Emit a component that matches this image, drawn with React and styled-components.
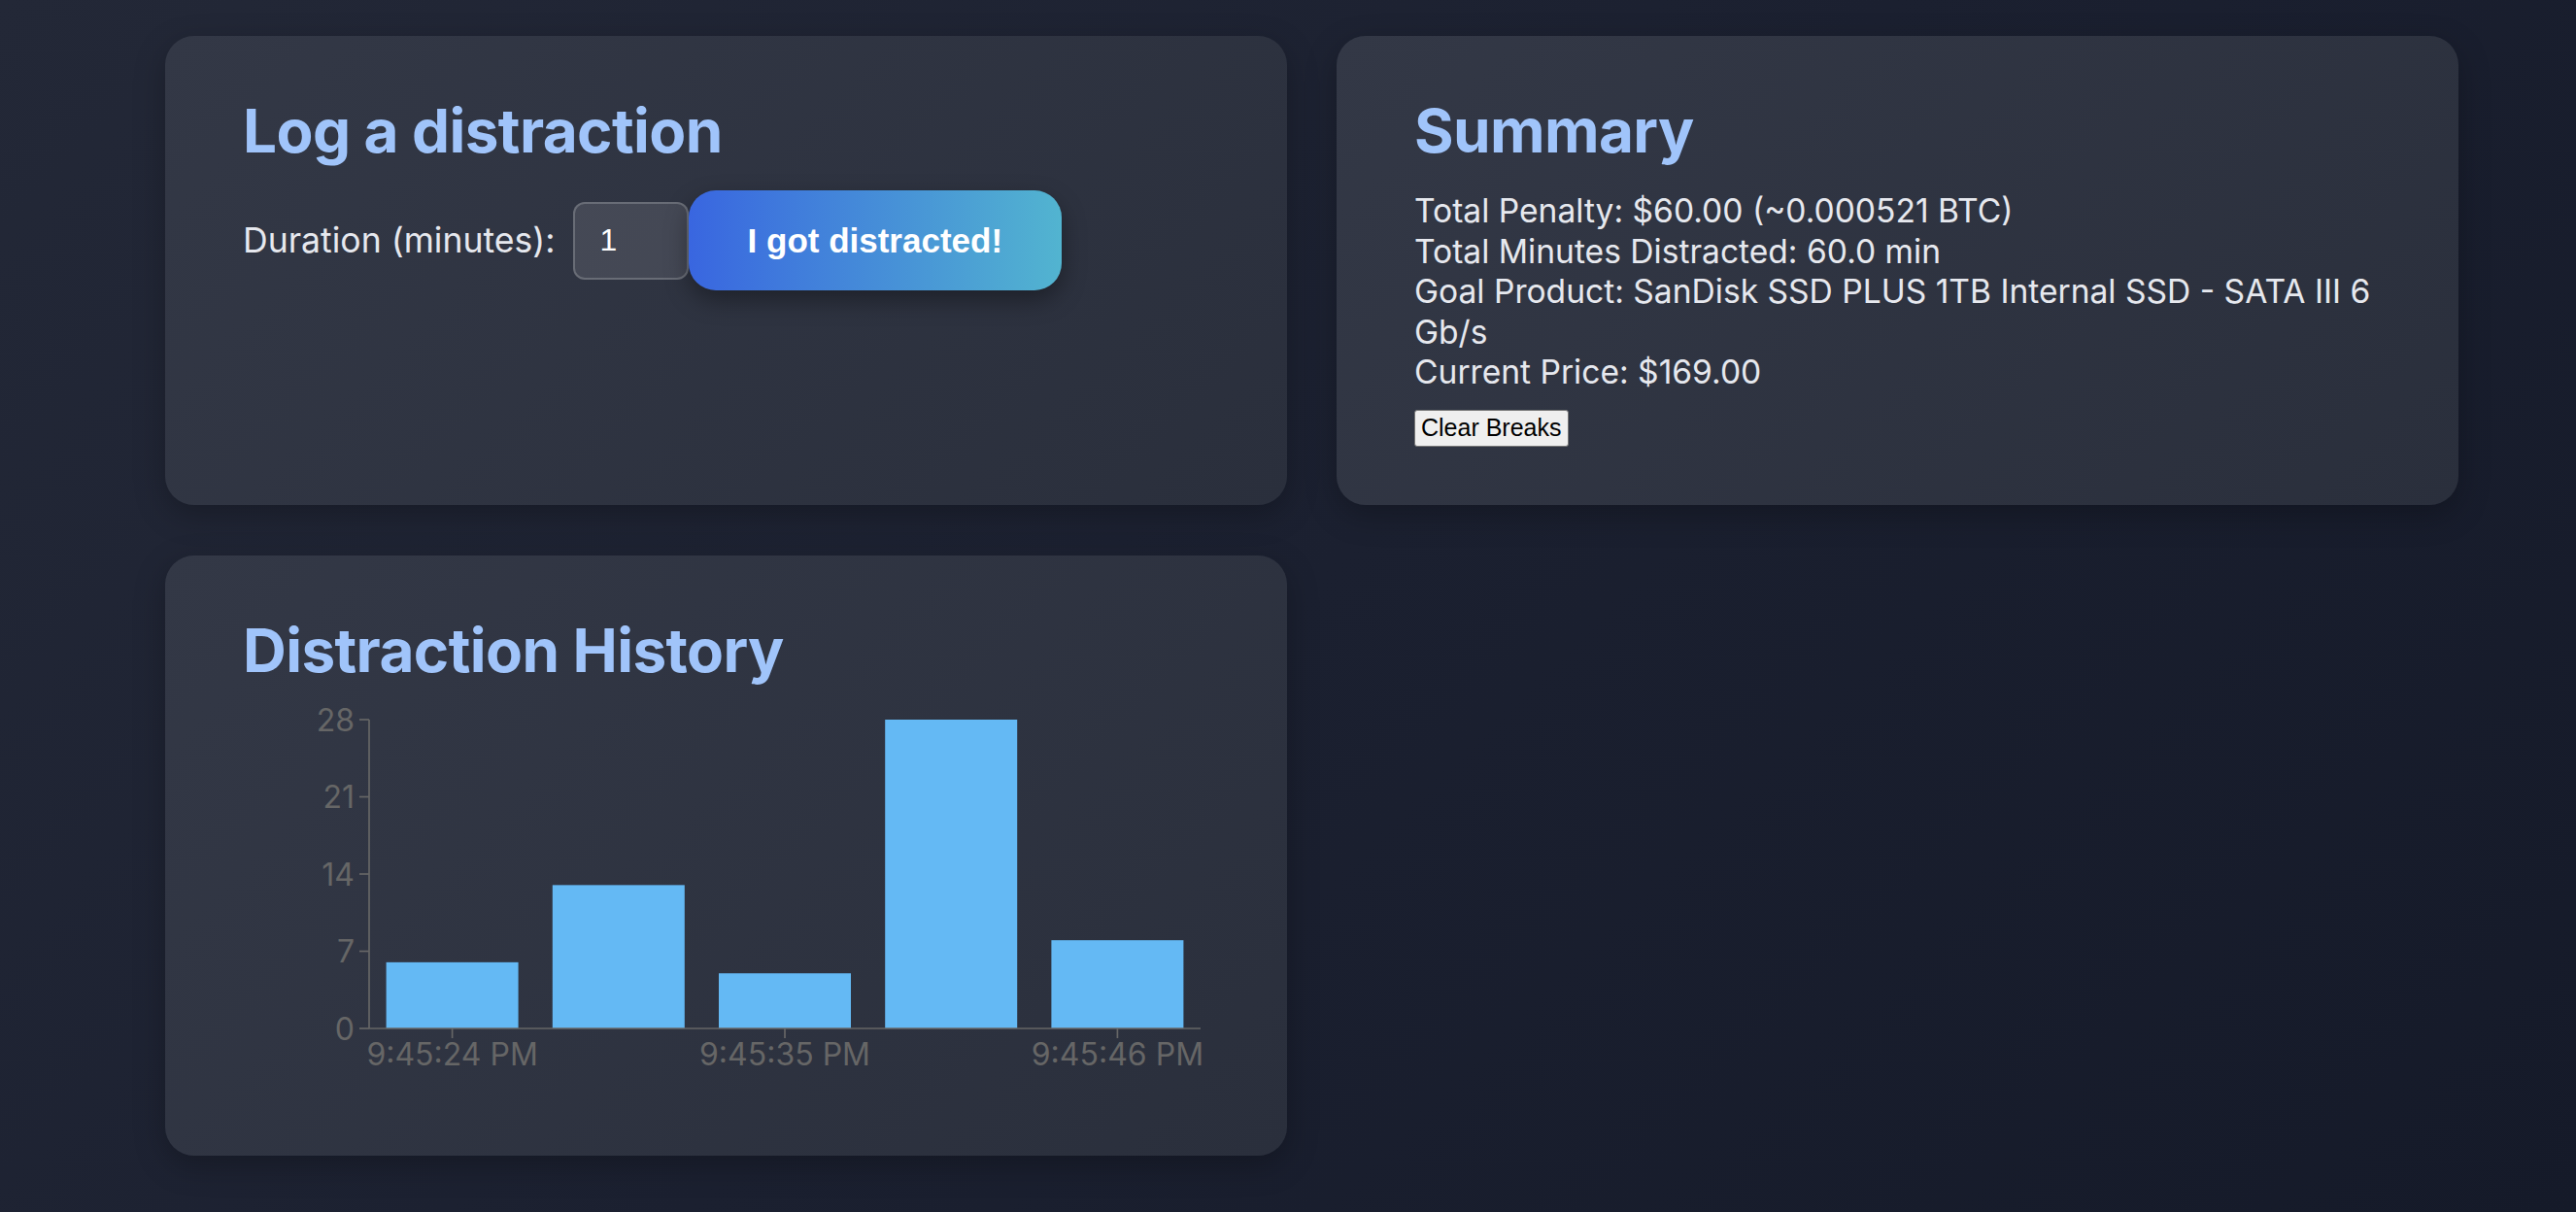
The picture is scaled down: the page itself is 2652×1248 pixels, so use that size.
import React from "react";
import styled, { createGlobalStyle } from "styled-components";

const GlobalStyle = createGlobalStyle`
  html, body { margin: 0; padding: 0; }
  body {
    min-height: 1248px;
    background: linear-gradient(135deg, #232837 0%, #1b2030 50%, #151a29 100%);
    font-family: Inter, "Noto Sans", sans-serif;
    color: #e6e8ee;
  }
`;

const Page = styled.div`
  padding: 37px 0 0 170px;
`;

const Grid = styled.div`
  display: grid;
  grid-template-columns: 1155px 1155px;
  column-gap: 51px;
  row-gap: 52px;
  align-items: stretch;
`;

const Card = styled.section`
  box-sizing: border-box;
  padding: 60px 80px;
  border-radius: 30px;
  background: linear-gradient(135deg, #333846 0%, #2a2f3c 100%);
  box-shadow: 0 10px 32px rgba(0, 0, 0, 0.25);
`;

const Title = styled.h2`
  margin: 0 0 24px;
  font-family: Inter, sans-serif;
  font-weight: 700;
  font-size: 62px;
  line-height: 75px;
  letter-spacing: -0.6px;
  color: #a0c4fa;
`;

const Row = styled.div`
  display: flex;
  align-items: center;
`;

const Label = styled.label`
  font-size: 35.6px;
  color: #e6e8ee;
  margin-right: 18px;
`;

const Input = styled.input`
  box-sizing: border-box;
  width: 119px;
  height: 80px;
  padding: 0 26px;
  border: 2px solid rgba(255, 255, 255, 0.2);
  border-radius: 12px;
  background: rgba(255, 255, 255, 0.1);
  color: #ffffff;
  font-family: "Liberation Sans", Arial, sans-serif;
  font-size: 32px;
  outline: none;
`;

const DistractButton = styled.button`
  box-sizing: border-box;
  height: 103px;
  padding: 0 61px;
  border: none;
  border-radius: 28px;
  background: linear-gradient(90deg, #3966e0 0%, #52b4d0 100%);
  color: #ffffff;
  font-family: "Liberation Sans", Arial, sans-serif;
  font-weight: 700;
  font-size: 35px;
  box-shadow: 0 10px 24px rgba(0, 0, 0, 0.35);
  cursor: pointer;
`;

const Line = styled.div`
  font-size: 33.6px;
  line-height: 41.5px;
  color: #e6e8ee;
`;

const ClearButton = styled.button`
  box-sizing: border-box;
  margin-top: 18px;
  height: 38px;
  padding: 0 6px;
  border: 1.5px solid #767676;
  border-radius: 3px;
  background: #efefef;
  color: #000000;
  font-family: "Liberation Sans", Arial, sans-serif;
  font-size: 25px;
  cursor: pointer;
`;

const ChartSvg = styled.svg`
  display: block;
  overflow: visible;
  font-family: Inter, sans-serif;
`;

const data = [
  { t: "9:45:24 PM", v: 6 },
  { t: "9:45:30 PM", v: 13 },
  { t: "9:45:35 PM", v: 5 },
  { t: "9:45:41 PM", v: 28 },
  { t: "9:45:46 PM", v: 8 },
];

function Chart() {
  const W = 995;
  const H = 399;
  const left = 130;
  const right = 986;
  const top = 10;
  const bottom = 328;
  const max = 28;
  const band = (right - left) / data.length;
  const barW = 136;
  const scale = (v) => bottom - (v / max) * (bottom - top);
  const yTicks = [0, 7, 14, 21, 28];
  return (
    <ChartSvg width={W} height={H} viewBox={`0 0 ${W} ${H}`}>
      {data.map((d, i) => {
        const x = left + i * band + (band - barW) / 2;
        const y = scale(d.v);
        return <rect key={i} x={x} y={y} width={barW} height={bottom - y} fill="#64b9f4" />;
      })}
      <line x1={left} y1={top} x2={left} y2={bottom} stroke="#666" strokeWidth="1.7" />
      <line x1={left} y1={bottom} x2={right} y2={bottom} stroke="#666" strokeWidth="1.7" />
      {yTicks.map((t) => {
        const y = scale(t);
        return (
          <g key={t}>
            <line x1={left - 10} y1={y} x2={left} y2={y} stroke="#666" strokeWidth="1.7" />
            <text x={left - 15} y={y + 11.5} textAnchor="end" fontSize="32" fill="#666">
              {t}
            </text>
          </g>
        );
      })}
      {[0, 2, 4].map((i) => {
        const cx = left + i * band + band / 2;
        return (
          <g key={i}>
            <line x1={cx} y1={bottom} x2={cx} y2={bottom + 10} stroke="#666" strokeWidth="1.7" />
            <text x={cx} y={366} textAnchor="middle" fontSize="32" fill="#666">
              {data[i].t}
            </text>
          </g>
        );
      })}
    </ChartSvg>
  );
}

export default function App() {
  return (
    <>
      <GlobalStyle />
      <Page>
        <Grid>
          <Card>
            <Title>Log a distraction</Title>
            <Row>
              <Label htmlFor="dur">Duration (minutes):</Label>
              <Input id="dur" type="text" defaultValue="1" />
              <DistractButton>I got distracted!</DistractButton>
            </Row>
          </Card>
          <Card>
            <Title>Summary</Title>
            <Line>Total Penalty: $60.00 (~0.000521 BTC)</Line>
            <Line>Total Minutes Distracted: 60.0 min</Line>
            <Line>Goal Product: SanDisk SSD PLUS 1TB Internal SSD - SATA III 6 Gb/s</Line>
            <Line>Current Price: $169.00</Line>
            <ClearButton>Clear Breaks</ClearButton>
          </Card>
          <Card>
            <Title>Distraction History</Title>
            <Chart />
          </Card>
        </Grid>
      </Page>
    </>
  );
}
